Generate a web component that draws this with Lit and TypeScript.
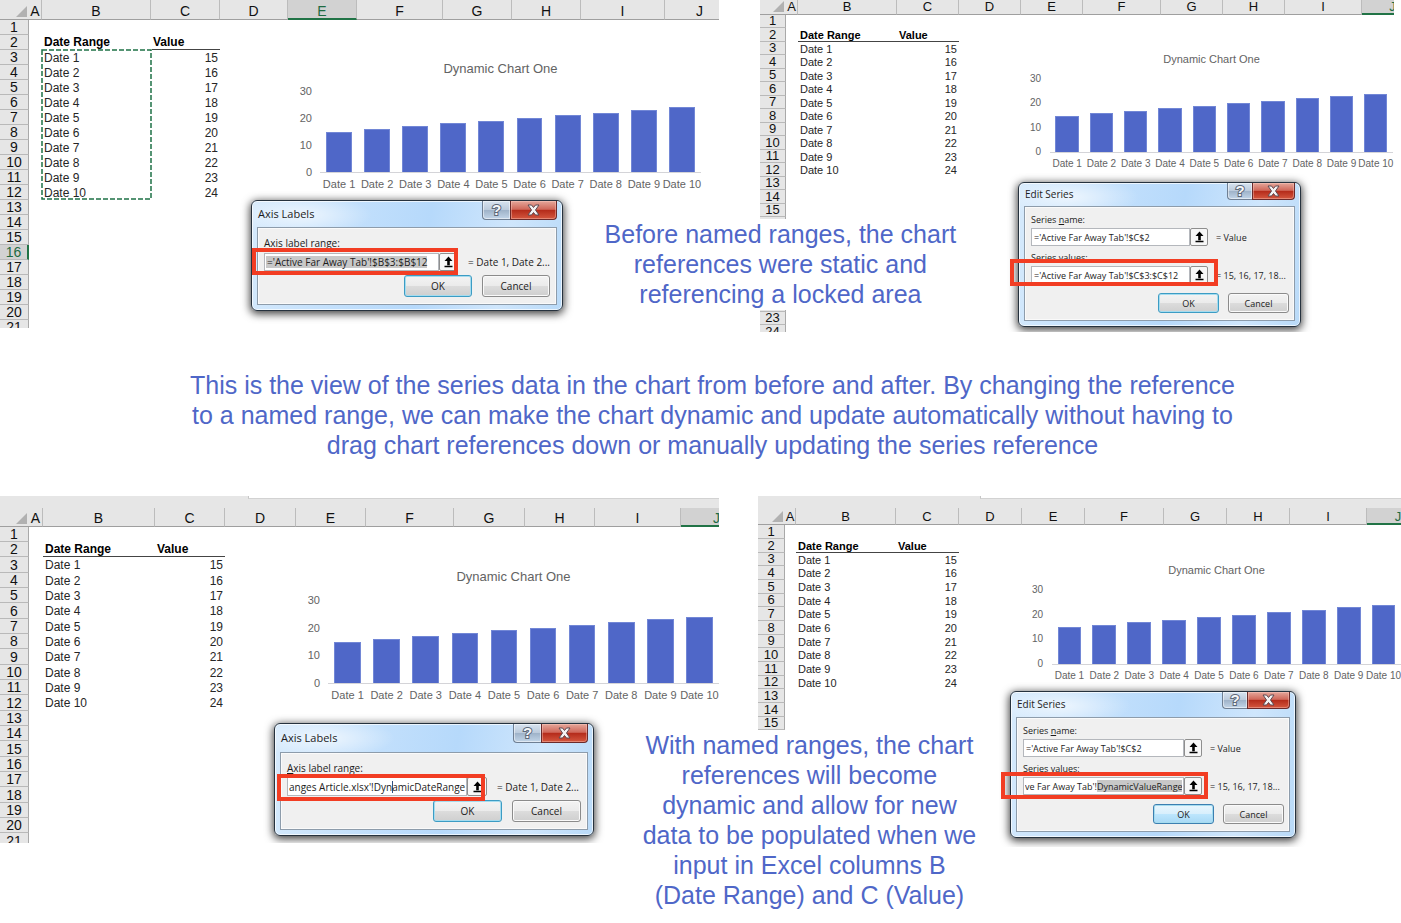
import { LitElement, html, css, nothing } from "lit";
import { customElement, property } from "lit/decorators.js";

const POINTS = [15, 16, 17, 18, 19, 20, 21, 22, 23, 24];
const AXIS_MAX = 30;
const COLUMNS = ["A", "B", "C", "D", "E", "F", "G", "H", "I", "J"];

interface Field {
  before?: string;
  key?: string;
  after: string;
  value: string;
  preview: string;
  mark?: "all" | "tail" | "caret";
  highlighted?: boolean;
}

/* Bar chart embedded in a worksheet */
@customElement("bar-chart")
class BarChart extends LitElement {
  static styles = css`
    :host {
      display: block;
      box-sizing: border-box;
      padding-right: 5px;
      color: #636363;
      font-family: "Liberation Sans", Arial, sans-serif;
      font-size: var(--axis-size);
    }
    .title {
      margin: 0 0 var(--title-gap);
      font-size: var(--title-size);
      font-weight: 400;
      line-height: 18px;
      text-align: center;
    }
    .body {
      display: grid;
      grid-template-columns: var(--tick-width) 1fr;
      column-gap: var(--tick-gap);
    }
    .ticks {
      display: flex;
      flex-direction: column;
      justify-content: space-between;
      align-items: flex-end;
      height: var(--plot-height);
    }
    .tick {
      height: 0;
      line-height: 0;
    }
    .plot {
      display: grid;
      grid-template-columns: repeat(10, 1fr);
      align-items: end;
      justify-items: center;
      height: var(--plot-height);
      border-bottom: 1px solid #d4d4d8;
    }
    .bar {
      box-sizing: border-box;
      width: 68%;
      background: #4f67c8;
      border: 1px solid #7287d6;
      border-bottom: 0;
    }
    .labels {
      grid-column: 2;
      display: grid;
      grid-template-columns: repeat(10, minmax(0, 1fr));
      margin-top: var(--label-gap);
      line-height: 12px;
    }
    .label {
      display: flex;
      justify-content: center;
      white-space: nowrap;
    }
  `;

  render() {
    return html`
      <h3 class="title">Dynamic Chart One</h3>
      <div class="body">
        <div class="ticks">
          ${[30, 20, 10, 0].map((t) => html`<span class="tick">${t}</span>`)}
        </div>
        <div class="plot">
          ${POINTS.map((v) => html`<div class="bar" style="height:${(v / AXIS_MAX) * 100}%"></div>`)}
        </div>
        <div class="labels">
          ${POINTS.map((_, i) => html`<span class="label">Date ${i + 1}</span>`)}
        </div>
      </div>
    `;
  }
}

/* Glass-framed dialog with one or two reference fields */
@customElement("range-dialog")
class RangeDialog extends LitElement {
  @property() heading = "";
  @property({ attribute: false }) fields: Field[] = [];
  @property({ type: Boolean }) hot = false;

  static styles = css`
    :host {
      display: block;
      box-sizing: border-box;
      border: 1px solid #26323e;
      border-radius: 6px;
      padding: 0 5px 5px;
      background:
        radial-gradient(ellipse 70px 20px at 50px 14px, rgba(255, 255, 255, 0.65), transparent),
        linear-gradient(100deg, #d6eafc 0%, #c3e0fc 30%, #b6d9fb 55%, #cfe6fc 80%, #b9daf8 100%);
      box-shadow:
        inset 0 0 0 1px rgba(255, 255, 255, 0.7),
        0 2px 9px 1px rgba(0, 0, 0, 0.75);
      color: #1c1c1c;
      font-family: "Open Sans", "Noto Sans", sans-serif;
      font-size: var(--text-size);
    }
    .titlebar {
      display: flex;
      justify-content: space-between;
      height: var(--titlebar-height);
    }
    .heading {
      margin: 0 1px;
      font-size: var(--heading-size);
      font-weight: 400;
      line-height: var(--titlebar-height);
    }
    .captions {
      display: flex;
      height: var(--caption-height);
    }
    .caption {
      display: flex;
      align-items: center;
      justify-content: center;
      margin: 0;
      padding: 0;
      border: 1px solid #6f7f93;
      border-top: 0;
      font: 700 15px/14px "Liberation Sans", Arial, sans-serif;
    }
    .help {
      width: var(--help-width);
      border-right: 0;
      border-radius: 0 0 0 4px;
      background: linear-gradient(#d7e3f0 0%, #bccbdc 48%, #9fb3c9 52%, #c2d5e8 100%);
      box-shadow: inset 0 0 0 1px rgba(255, 255, 255, 0.5);
      color: #f4f6f8;
      -webkit-text-stroke: 2px #5d6878;
      paint-order: stroke fill;
    }
    .close {
      width: var(--close-width);
      border-color: #6b2a2a;
      border-radius: 0 0 4px 0;
      background: linear-gradient(#e5a79b 0%, #d0685a 46%, #b52c1b 52%, #d4573f 100%);
      box-shadow: inset 0 0 0 1px rgba(255, 210, 200, 0.4);
    }
    .cross {
      width: 13px;
      height: 12px;
    }
    .panel {
      box-sizing: border-box;
      border: 1px solid #8d9cab;
      box-shadow: inset 0 0 0 1px #fafafa;
      padding: var(--panel-top) var(--panel-right) 7px 6px;
      background: #f0f0f0;
    }
    .field + .field {
      margin-top: 6px;
    }
    .label {
      display: block;
      height: var(--label-height);
      line-height: var(--label-height);
      margin-bottom: var(--label-gap);
    }
    .row {
      position: relative;
      display: flex;
      align-items: center;
      height: var(--row-height);
    }
    .input {
      box-sizing: border-box;
      width: var(--input-width);
      height: 100%;
      margin: 0;
      padding: 0 2px;
      border: 1px solid #b4b7bc;
      border-radius: 0;
      background: #fff;
      color: inherit;
      font: inherit;
    }
    .mark-all {
      background: linear-gradient(#c8c8c8, #c8c8c8) 1px 2px / var(--mark-width) 12px no-repeat, #fff;
    }
    .mark-tail {
      padding: 0 1px;
      background: linear-gradient(#c8c8c8, #c8c8c8) right 1px top 2px / var(--mark-width) 12px no-repeat, #fff;
    }
    .mark-caret {
      padding: 0 0 0 1px;
      background: linear-gradient(#2f4f7f, #2f4f7f) 104px 3px / 1px 12px no-repeat, #fff;
    }
    .picker {
      box-sizing: border-box;
      display: flex;
      align-items: center;
      justify-content: center;
      width: var(--picker-width);
      height: 100%;
      margin: 0;
      padding: 0;
      border: 1px solid #8e8e8e;
      border-radius: 2px;
      background: #f7f7f7;
    }
    .arrow {
      width: 9px;
      height: 12px;
    }
    .preview {
      margin-left: var(--preview-gap);
      white-space: nowrap;
    }
    .outline {
      position: absolute;
      box-sizing: border-box;
      left: var(--outline-left);
      top: var(--outline-top);
      width: var(--outline-width);
      height: 27px;
      border: 4px solid #f23d23;
      pointer-events: none;
    }
    .actions {
      display: flex;
      justify-content: flex-end;
      gap: var(--action-gap);
      margin-top: var(--actions-top);
    }
    .action {
      box-sizing: border-box;
      width: var(--action-width);
      height: var(--action-height);
      margin: 0;
      padding: 0;
      border: 1px solid #8b8b8b;
      border-radius: 3px;
      background: linear-gradient(#f3f3f3 0%, #ebebeb 49%, #dcdcdc 51%, #cfcfcf 100%);
      box-shadow: inset 0 0 0 1px #fafafa;
      color: inherit;
      font: inherit;
    }
    .default {
      border-color: #3c9cc4;
      box-shadow: inset 0 0 0 1px #a5dcef;
    }
    .hot {
      border-color: #3c7fb1;
      background: linear-gradient(#e9f6fd 0%, #d8effc 49%, #bde6fd 51%, #a7d9f5 100%);
    }
  `;

  private renderField(f: Field, i: number) {
    return html`
      <div class="field">
        <label class="label" for="f${i}">${f.before ?? ""}<u>${f.key}</u>${f.after}</label>
        <div class="row">
          <input id="f${i}" class="input ${f.mark ? `mark-${f.mark}` : ""}" type="text" .value=${f.value} spellcheck="false" />
          <button class="picker" type="button" aria-label="Collapse dialog">
            <svg class="arrow" viewBox="0 0 9 12" aria-hidden="true">
              <path d="M4.500.5 8.500 5H5.800V9.200H3.200V5H.5Z M.5 9.800H8.500V11.300H.5Z" fill="#000" />
            </svg>
          </button>
          <span class="preview">${f.preview}</span>
          ${f.highlighted ? html`<div class="outline"></div>` : nothing}
        </div>
      </div>
    `;
  }

  render() {
    return html`
      <div class="titlebar">
        <h3 class="heading">${this.heading}</h3>
        <div class="captions">
          <button class="caption help" type="button" aria-label="Help">?</button>
          <button class="caption close" type="button" aria-label="Close">
            <svg class="cross" viewBox="0 0 13 12" aria-hidden="true">
              <path
                d="M1 1H4.500L6.500 3.500 8.500 1H12L8.500 6 12 11H8.500L6.500 8.500 4.500 11H1L4.500 6Z"
                fill="#f5f3f3" stroke="#5c4a52" stroke-width="1" stroke-linejoin="round" />
            </svg>
          </button>
        </div>
      </div>
      <div class="panel">
        ${this.fields.map((f, i) => this.renderField(f, i))}
        <div class="actions">
          <button class="action default ${this.hot ? "hot" : ""}" type="button">OK</button>
          <button class="action" type="button">Cancel</button>
        </div>
      </div>
    `;
  }
}

/* Worksheet grid: column letters, row numbers and the source table */
@customElement("work-sheet")
class WorkSheet extends LitElement {
  @property({ attribute: false }) widths: number[] = [];
  @property({ type: Number }) rows = 21;
  /* Rows from blankFrom up to blankTo lie under a note and carry no number */
  @property({ type: Number }) blankFrom = 0;
  @property({ type: Number }) blankTo = 0;
  @property() activeColumn = "";
  @property({ type: Number }) activeRow = 0;
  @property({ type: Boolean }) ribbon = false;
  @property({ type: Boolean }) copying = false;

  static styles = css`
    :host {
      display: block;
      position: relative;
      overflow: hidden;
      min-width: 0;
      font-family: "Liberation Sans", Arial, sans-serif;
    }
    .ribbon {
      display: flex;
      justify-content: flex-end;
      height: 12px;
      background: #e6e6e6;
    }
    .formula {
      box-sizing: border-box;
      width: var(--formula-width);
      height: 3px;
      border-left: 1px solid #c6c6c6;
      border-bottom: 1px solid #d2d2d2;
      background: #fff;
    }
    .grid {
      table-layout: fixed;
      width: 0;
      border-collapse: separate;
      border-spacing: 0;
      line-height: 12px;
      font-size: var(--cell-size);
      color: #262626;
    }
    .grid th,
    .grid td {
      box-sizing: border-box;
      padding: 0;
      white-space: nowrap;
      vertical-align: middle;
    }
    .line {
      height: var(--row-a);
    }
    .line:nth-child(2n) {
      height: var(--row-b);
    }
    .line:nth-child(3n) {
      height: var(--row-c);
    }
    .line:nth-child(6n) {
      height: var(--row-d);
    }
    .grid .column,
    .grid .number,
    .grid .corner {
      background: #e6e6e6;
      color: #111;
      font-size: var(--head-size);
      font-weight: 400;
      text-align: center;
    }
    .grid .column,
    .grid .corner {
      height: var(--head-height);
      border-bottom: 1px solid #9f9f9f;
    }
    .grid .column {
      padding-top: var(--head-top);
      border-right: 1px solid #bcbcbc;
    }
    .grid .corner {
      padding: 0 2px 2px 0;
      text-align: right;
      vertical-align: bottom;
    }
    .triangle {
      display: block;
      width: 11px;
      height: 11px;
      margin-left: auto;
      fill: #b1b1b1;
    }
    .grid .number {
      border-right: 1px solid #a9a9a9;
      border-bottom: 1px solid #b9b9b9;
    }
    .grid .column.active {
      background: #d2d2d2;
      border-bottom: 2px solid #217346;
      color: #1f6b42;
    }
    .grid .number.active {
      background: #d2d2d2;
      border-right: 2px solid #217346;
      color: #1f6b42;
    }
    .grid .name,
    .grid .date {
      padding-left: 2px;
      text-align: left;
    }
    .grid .name {
      border-bottom: 1px solid #444;
      color: #000;
      font-weight: 700;
    }
    .grid .amount {
      padding-right: 2px;
      text-align: right;
    }
    .ants {
      position: absolute;
      left: 41px;
      top: 49px;
      width: 111px;
      height: 151px;
    }
  `;

  private cells(row: number) {
    if (row === 2) {
      return html`<td></td><th class="name" scope="col">Date Range</th><th class="name" scope="col">Value</th>`;
    }
    if (row >= 3 && row <= 12) {
      return html`<td></td><td class="date">Date ${row - 2}</td><td class="amount">${POINTS[row - 3]}</td>`;
    }
    return html`<td></td><td></td><td></td>`;
  }

  render() {
    const numbers = Array.from({ length: this.rows }, (_, i) => i + 1);
    return html`
      ${this.ribbon ? html`<div class="ribbon"><div class="formula"></div></div>` : nothing}
      <table class="grid">
        <colgroup>${this.widths.map((w) => html`<col style="width:${w}px" />`)}</colgroup>
        <thead>
          <tr>
            <td class="corner">
              <svg class="triangle" viewBox="0 0 11 11" aria-hidden="true"><path d="M11 0V11H0Z" /></svg>
            </td>
            ${COLUMNS.map((c) => html`<th scope="col" class="column ${c === this.activeColumn ? "active" : ""}">${c}</th>`)}
          </tr>
        </thead>
        <tbody>
          ${numbers.map(
            (n) => html`<tr class="line">
              <th scope="row" class="number ${n === this.activeRow ? "active" : ""}">
                ${n >= this.blankFrom && n <= this.blankTo ? nothing : n}
              </th>
              ${this.cells(n)}
              <td colspan="7"></td>
            </tr>`
          )}
        </tbody>
      </table>
      ${this.copying
        ? html`<svg class="ants" viewBox="0 0 111 151" aria-hidden="true">
            <rect x="1" y="1" width="109" height="149" fill="none" stroke="#fff" stroke-width="2" />
            <rect x="1" y="1" width="109" height="149" fill="none" stroke="#1e7145" stroke-width="1.500" stroke-dasharray="5 2" />
          </svg>`
        : nothing}
      <slot></slot>
    `;
  }
}

const name: Field = { before: "Series ", key: "n", after: "ame:", value: "='Active Far Away Tab'!$C$2", preview: "= Value" };

@customElement("app-root")
class AppRoot extends LitElement {
  static styles = css`
    :host {
      display: block;
      background: #fff;
      color: #4f67c8;
      font-family: "Liberation Sans", Arial, sans-serif;
    }
    .band {
      position: relative;
      display: grid;
      align-items: start;
    }
    .before {
      grid-template-columns: 719fr 634fr;
      column-gap: 41px;
      padding-right: 7px;
    }
    .after {
      grid-template-columns: 719fr 643fr;
      column-gap: 39px;
      min-height: 427px;
    }
    .note {
      margin: 0;
      font-size: 25px;
      line-height: 30px;
      text-align: center;
      white-space: nowrap;
    }
    .summary {
      padding: 38px 0 36px 24px;
    }
    .callout {
      position: absolute;
      z-index: 2;
      background: #fff;
    }
    .callout-before {
      left: 42%;
      top: 219px;
      width: 384px;
      height: 91px;
    }
    .callout-after {
      left: 45%;
      top: 234px;
      width: 358px;
    }

    .sheet-one {
      height: 328px;
      --cell-size: 12px;
      --head-size: 14px;
      --head-top: 3px;
      --head-height: 20px;
      --row-a: 15px;
      --row-b: 15px;
      --row-c: 15px;
      --row-d: 15px;
    }
    .sheet-two {
      height: 332px;
      --cell-size: 11px;
      --head-size: 13px;
      --head-top: 0;
      --head-height: 15px;
      --row-a: 13px;
      --row-b: 14px;
      --row-c: 13px;
      --row-d: 14px;
    }
    .sheet-three {
      height: 347px;
      --formula-width: 471px;
      --cell-size: 12px;
      --head-size: 14px;
      --head-top: 2px;
      --head-height: 19px;
      --row-a: 15px;
      --row-b: 15px;
      --row-c: 16px;
      --row-d: 16px;
    }
    .sheet-four {
      height: 351px;
      --formula-width: 421px;
      --cell-size: 11px;
      --head-size: 13px;
      --head-top: 2px;
      --head-height: 17px;
      --row-a: 14px;
      --row-b: 14px;
      --row-c: 13px;
      --row-d: 13px;
    }

    .chart {
      position: absolute;
      --axis-size: 11px;
      --title-size: 13px;
      --tick-width: 12px;
      --tick-gap: 8px;
    }
    .small-chart {
      --axis-size: 10px;
      --title-size: 11px;
      --tick-width: 11px;
      --tick-gap: 9px;
      --title-gap: 11px;
      --label-gap: 5px;
    }
    .chart-one {
      left: 300px;
      top: 60px;
      width: 406px;
      --title-gap: 13px;
      --plot-height: 81px;
      --label-gap: 5px;
    }
    .chart-two {
      left: 270px;
      top: 50px;
      width: 368px;
      --plot-height: 73px;
    }
    .chart-three {
      left: 308px;
      top: 72px;
      width: 416px;
      --title-gap: 14px;
      --plot-height: 83px;
      --label-gap: 5px;
    }
    .chart-four {
      left: 274px;
      top: 65px;
      width: 374px;
      --plot-height: 74px;
    }

    .dialog {
      position: absolute;
      --text-size: 10px;
      --heading-size: 11px;
      --caption-height: 19px;
      --help-width: 28px;
      --close-width: 47px;
      --panel-top: 8px;
      --panel-right: 6px;
      --label-height: 14px;
      --actions-top: 4px;
      --action-height: 22px;
      --action-width: 68px;
      --action-gap: 10px;
    }
    .small-dialog {
      --text-size: 9px;
      --heading-size: 10px;
      --caption-height: 17px;
      --help-width: 25px;
      --close-width: 43px;
      --panel-top: 7px;
      --panel-right: 5px;
      --label-height: 12px;
      --label-gap: 2px;
      --row-height: 18px;
      --actions-top: 9px;
      --action-height: 20px;
      --action-width: 61px;
      --action-gap: 9px;
      --preview-gap: 8px;
      --picker-width: 18px;
    }
    .dialog-one {
      left: 251px;
      top: 200px;
      width: 312px;
      --titlebar-height: 26px;
      --label-gap: 3px;
      --row-height: 18px;
      --input-width: 175px;
      --picker-width: 18px;
      --preview-gap: 11px;
      --mark-width: 161px;
      --outline-left: -12px;
      --outline-top: -5px;
      --outline-width: 206px;
    }
    .dialog-two {
      left: 258px;
      top: 182px;
      width: 283px;
      --titlebar-height: 23px;
      --input-width: 159px;
      --outline-left: -21px;
      --outline-top: -7px;
      --outline-width: 208px;
    }
    .dialog-three {
      left: 274px;
      top: 227px;
      width: 320px;
      --titlebar-height: 28px;
      --label-gap: 2px;
      --row-height: 19px;
      --input-width: 180px;
      --picker-width: 20px;
      --preview-gap: 10px;
      --action-width: 69px;
      --outline-left: -10px;
      --outline-top: -3px;
      --outline-width: 208px;
    }
    .dialog-four {
      left: 252px;
      top: 195px;
      width: 286px;
      --titlebar-height: 25px;
      --input-width: 161px;
      --mark-width: 85px;
      --outline-left: -22px;
      --outline-top: -5px;
      --outline-width: 207px;
    }
  `;

  render() {
    const axis = { key: "A", after: "xis label range:", preview: "= Date 1, Date 2...", highlighted: true };
    const values = { before: "Series ", key: "v", after: "alues:", preview: "= 15, 16, 17, 18...", highlighted: true };
    return html`
      <section class="band before">
        <work-sheet class="sheet-one" .widths=${[29, 13, 109, 69, 68, 69, 86, 69, 69, 84, 70]} activeColumn="E" activeRow="16" copying>
          <bar-chart class="chart chart-one"></bar-chart>
          <range-dialog class="dialog dialog-one" heading="Axis Labels"
            .fields=${[{ ...axis, value: "='Active Far Away Tab'!$B$3:$B$12", mark: "all" }]}></range-dialog>
        </work-sheet>
        <work-sheet class="sheet-two" .widths=${[26, 12, 99, 62, 62, 62, 78, 62, 62, 77, 62]} rows="24" blankFrom="16" blankTo="22" activeColumn="J">
          <bar-chart class="chart small-chart chart-two"></bar-chart>
          <range-dialog class="dialog small-dialog dialog-two" heading="Edit Series"
            .fields=${[name, { ...values, value: "='Active Far Away Tab'!$C$3:$C$12" }]}></range-dialog>
        </work-sheet>
        <p class="note callout callout-before">
          Before named ranges, the chart<br />references were static and<br />referencing a locked area
        </p>
      </section>

      <p class="note summary">
        This is the view of the series data in the chart from before and after. By changing the reference<br />to a
        named range, we can make the chart dynamic and update automatically without having to<br />drag chart
        references down or manually updating the series reference
      </p>

      <section class="band after">
        <work-sheet class="sheet-three" .widths=${[29, 14, 112, 70, 71, 70, 88, 71, 70, 86, 72]} activeColumn="J" ribbon>
          <bar-chart class="chart chart-three"></bar-chart>
          <range-dialog class="dialog dialog-three" heading="Axis Labels"
            .fields=${[{ ...axis, value: "anges Article.xlsx'!DynamicDateRange", mark: "caret" }]}></range-dialog>
        </work-sheet>
        <work-sheet class="sheet-four" .widths=${[27, 11, 100, 63, 63, 63, 79, 63, 63, 77, 63]} rows="15" activeColumn="J" ribbon>
          <bar-chart class="chart small-chart chart-four"></bar-chart>
          <range-dialog class="dialog small-dialog dialog-four" heading="Edit Series" hot
            .fields=${[name, { ...values, value: "ve Far Away Tab'!DynamicValueRange", mark: "tail" }]}></range-dialog>
        </work-sheet>
        <p class="note callout callout-after">
          With named ranges, the chart<br />references will become<br />dynamic and allow for new<br />data to be
          populated when we<br />input in Excel columns B<br />(Date Range) and C (Value)
        </p>
      </section>
    `;
  }
}
